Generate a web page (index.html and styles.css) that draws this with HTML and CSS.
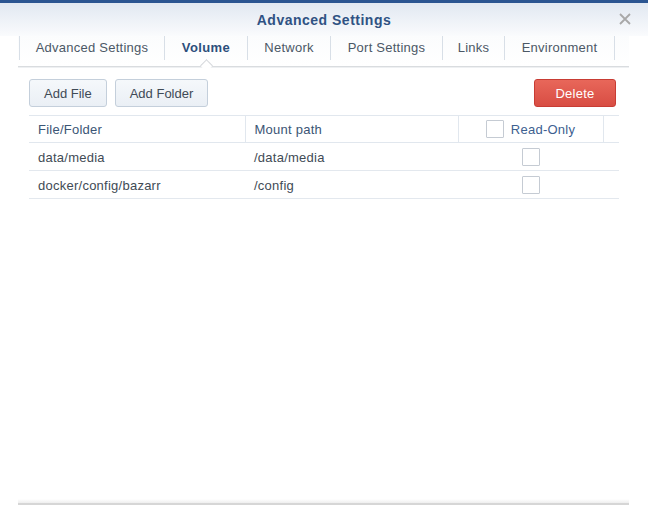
FILE: index.html
```html
<!DOCTYPE html>
<html>
<head>
<meta charset="utf-8">
<link rel="stylesheet" href="styles.css">
</head>
<body>
<div class="window">
  <div class="topbar"></div>
  <div class="header">
    <div class="title">Advanced Settings</div>
    <span class="close" aria-label="close">
      <svg width="12" height="12" viewBox="0 0 12 12"><path d="M1 1 L11 11 M11 1 L1 11" stroke="#a8a8a8" stroke-width="1.8" fill="none"/></svg>
    </span>
  </div>
  <div class="tabs">
    <div class="tab t-adv">Advanced Settings</div>
    <div class="tab t-vol active">Volume</div>
    <div class="tab t-net">Network</div>
    <div class="tab t-port">Port Settings</div>
    <div class="tab t-links">Links</div>
    <div class="tab t-env">Environment</div>
  </div>
  <div class="content">
    <div class="toolbar">
      <button class="btn">Add File</button>
      <button class="btn">Add Folder</button>
      <span class="spacer"></span>
      <button class="btn danger">Delete</button>
    </div>
    <table class="grid">
      <colgroup>
        <col class="c1"><col class="c2"><col class="c3"><col class="c4">
      </colgroup>
      <thead>
        <tr>
          <th>File/Folder</th>
          <th>Mount path</th>
          <th class="center"><span class="hcheck"><span class="cb"></span>Read-Only</span></th>
          <th class="last"></th>
        </tr>
      </thead>
      <tbody>
        <tr><td>data/media</td><td>/data/media</td><td class="center"><span class="cb"></span></td><td></td></tr>
        <tr><td>docker/config/bazarr</td><td>/config</td><td class="center"><span class="cb"></span></td><td></td></tr>
      </tbody>
    </table>
  </div>
  <div class="footer"></div>
</div>
</body>
</html>
```
FILE: styles.css
```css
* { box-sizing: border-box; }
html, body { margin: 0; padding: 0; background: #fff; }
body {
  font-family: "Liberation Sans", Arial, sans-serif;
  font-size: 13px;
  letter-spacing: 0.25px;
  color: #414b55;
}
.window {
  height: 506px;
  display: flex;
  flex-direction: column;
  background: #fff;
}
.topbar {
  height: 3px;
  background: #2b5591;
}
.header {
  position: relative;
  height: 33px;
  background: linear-gradient(#e1e8f1, #fafbfd);
  display: flex;
  align-items: center;
  justify-content: center;
}
.title {
  font-weight: bold;
  font-size: 14px;
  letter-spacing: 0.5px;
  color: #2f5283;
  padding-top: 1px;
}
.close {
  position: absolute;
  right: 17px;
  top: 10px;
  width: 12px;
  height: 12px;
  display: block;
}
.close svg { display: block; }
.tabs {
  margin: 0 19px 0 18px;
  height: 31px;
  display: flex;
  align-items: flex-start;
  border-bottom: 1px solid #d9dcdf;
  box-shadow: 0 1px 0 #eef0f2;
  background: linear-gradient(#fbfcfd, #fff);
}
.tab {
  position: relative;
  flex: none;
  height: 24px;
  padding-bottom: 2px;
  border-right: 1px solid #d8dfe7;
  display: flex;
  align-items: center;
  justify-content: center;
  color: #4b5866;
  white-space: nowrap;
}
.tab:first-child {
  border-left: 1px solid #d8dfe7;
  margin-left: 1px;
}
.t-adv { width: 146px; }
.t-vol { width: 83px; }
.t-net { width: 83px; }
.t-port { width: 112px; }
.t-links { width: 62px; }
.t-env { width: 110px; }
.tab.active {
  font-weight: bold;
  color: #2d4f7c;
  letter-spacing: 0.4px;
}
.tab.active::after {
  content: "";
  position: absolute;
  left: 50%;
  bottom: -10px;
  width: 8px;
  height: 8px;
  margin-left: -4px;
  background: #fff;
  border-left: 1px solid #d3d6da;
  border-top: 1px solid #d3d6da;
  transform: rotate(45deg);
}
.content {
  flex: 1;
  padding: 12px 29px 0 29px;
}
.toolbar {
  display: flex;
  gap: 8px;
  padding-right: 3px;
  margin-bottom: 8px;
}
.spacer { flex: 1; }
.btn {
  font-family: inherit;
  font-size: 13px;
  letter-spacing: 0;
  height: 28px;
  padding: 0 14px;
  border: 1px solid #c4cfdb;
  border-radius: 3px;
  background: linear-gradient(#f5f8fb, #eaeff5);
  color: #3f4a56;
  cursor: pointer;
}
.btn.danger {
  width: 82px;
  border-color: #c83c34;
  background: linear-gradient(#e8675a, #d84d43);
  color: #fff;
  letter-spacing: 0.25px;
}
.grid {
  width: 100%;
  border-collapse: collapse;
  table-layout: fixed;
}
col.c1 { width: 216px; }
col.c2 { width: 213px; }
col.c3 { width: 145px; }
col.c4 { width: 16px; }
.grid th, .grid td {
  text-align: left;
  font-weight: normal;
  padding: 0 0 0 9px;
  white-space: nowrap;
}
.grid thead tr { border-top: 1px solid #e1e7ee; border-bottom: 1px solid #e1e7ee; }
.grid th {
  height: 27px;
  color: #3b5575;
  border-right: 1px solid #e1e7ee;
}
.grid th.last { border-right: none; }
.grid tbody tr { border-bottom: 1px solid #e3e8ee; }
.grid td { height: 28px; padding-top: 1px; color: #414b55; }
.grid .center { text-align: center; padding: 0; }
.hcheck {
  display: inline-flex;
  align-items: center;
  gap: 7px;
  color: #3d6090;
  vertical-align: middle;
}
.cb {
  display: inline-block;
  width: 18px;
  height: 18px;
  border: 1px solid #c5cbd3;
  border-radius: 1px;
  background: #fff;
  vertical-align: middle;
}
.footer {
  margin: 0 19px 1px 18px;
  height: 6px;
  background: linear-gradient(#fff, #f0f0f0 60%, #d6d6d6 67%, #d6d6d6);
}
```
